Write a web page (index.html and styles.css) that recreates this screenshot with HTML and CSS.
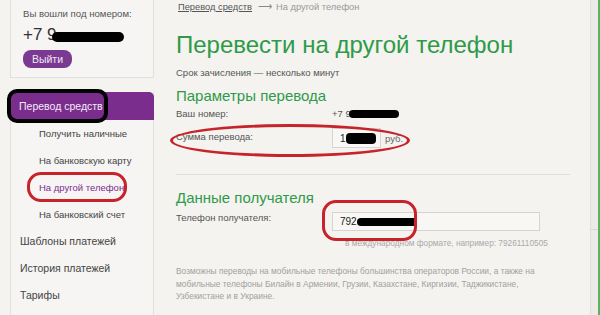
FILE: index.html
```html
<!DOCTYPE html>
<html lang="ru">
<head>
<meta charset="utf-8">
<link rel="stylesheet" href="styles.css">
</head>
<body>
<div class="page">
  <aside class="sidebar">
    <div class="login-box">
      <div class="login-label">Вы вошли под номером:</div>
      <div class="login-number">+7 9<span class="blob blob-login"></span></div>
      <button class="logout">Выйти</button>
    </div>
    <nav class="nav-box">
      <div class="nav-head">Перевод средств<span class="mark-black"></span></div>
      <ul class="subnav">
        <li>Получить наличные</li>
        <li>На банковскую карту</li>
        <li class="current">На другой телефон<span class="mark-red mark-nav"></span></li>
        <li>На банковский счет</li>
      </ul>
      <ul class="mainnav">
        <li>Шаблоны платежей</li>
        <li>История платежей</li>
        <li>Тарифы</li>
      </ul>
    </nav>
  </aside>
  <main class="content">
    <div class="crumbs"><a class="crumb-link">Перевод средств</a><span class="crumb-arrow">⟶</span><span class="crumb-cur">На другой телефон</span></div>
    <h1 class="title">Перевести на другой телефон</h1>
    <p class="sub">Срок зачисления — несколько минут</p>
    <h2 class="section">Параметры перевода</h2>
    <div class="row row-info">
      <div class="label">Ваш номер:</div>
      <div class="value">+7 9<span class="blob blob-num"></span></div>
    </div>
    <div class="row row-sum">
      <div class="label">Сумма перевода:</div>
      <div class="value"><span class="input input-sum">1<span class="blob blob-sum"></span></span><span class="unit">руб.</span></div>
      <span class="mark-red mark-sum"></span>
    </div>
    <hr class="sep">
    <h2 class="section section2">Данные получателя</h2>
    <div class="row row-phone">
      <div class="label">Телефон получателя:</div>
      <div class="value"><span class="input input-phone">792<span class="blob blob-phone"></span></span></div>
      <span class="mark-red mark-phone"></span>
    </div>
    <div class="hint">в международном формате, например: 79261110505</div>
    <p class="note">Возможны переводы на мобильные телефоны большинства операторов России, а также на мобильные телефоны Билайн в Армении, Грузии, Казахстане, Киргизии, Таджикистане, Узбекистане и в Украине.</p>
  </main>
  <div class="scroll"><div class="thumb"></div></div>
  <div class="edge"></div>
</div>
</body>
</html>
```
FILE: styles.css
```css
* { box-sizing: border-box; }
html, body { margin: 0; padding: 0; }
body {
  width: 600px; height: 315px; overflow: hidden;
  background: #f4f3f0;
  font-family: "Liberation Sans", Arial, sans-serif;
  color: #444;
}
.page { display: flex; height: 315px; }

.sidebar { width: 144px; margin-left: 10px; flex: none; display: flex; flex-direction: column; }
.login-box {
  height: 78px; border: 1px solid #e2e0dc; border-top: none;
  padding: 8px 0 0 12px; background: #f6f5f3;
}
.login-label { font-size: 9.6px; color: #555; line-height: 12px; }
.login-number { font-size: 17px; color: #333; margin-top: 6px; line-height: 18px; display: flex; align-items: center; }
.logout {
  margin-top: 6px; width: 49px; height: 18px; border: none; border-radius: 8px;
  background: #7a3a92; color: #f0e6f4; font: 10.5px "Liberation Sans", Arial, sans-serif;
  padding: 0; display: block;
}
.blob { display: inline-block; background: #000; border-radius: 6px; }
.blob-login { width: 72px; height: 10px; margin-left: -5px; margin-top: 3px; }
.nav-box {
  margin-top: 14px; flex: 1; border: 1px solid #e2e0dc; border-top: none; border-bottom: none;
  background: #f6f5f3;
}
.nav-head {
  position: relative; height: 28px; background: #7b2d8e; color: #f3eaf6;
  font-size: 10.5px; line-height: 28px; padding-left: 9px;
  border-top-right-radius: 5px; margin: 0 -1px 0 -1px;
}
.mark-black {
  position: absolute; left: -3px; top: -3px; width: 101px; height: 34px;
  border: 4px solid #000; border-radius: 10px;
}
.subnav, .mainnav { list-style: none; margin: 0; padding: 0; }
.subnav li {
  position: relative; font-size: 9.5px; color: #444; height: 27px; line-height: 27px; padding-left: 28px;
}
.subnav li.current { color: #7b2d8e; }
.mark-nav { left: 16px; top: -2px; width: 100px; height: 30px; }
.mainnav li { font-size: 10.5px; color: #444; height: 27px; line-height: 27px; padding-left: 9px; }

.content { flex: 1; margin-left: 22px; position: relative; }
.crumbs { font-size: 9.3px; margin-top: 1px; line-height: 12px; display: flex; align-items: center; padding-left: 2px; }
.crumb-link { color: #555; text-decoration: underline; }
.crumb-arrow { color: #888; margin: 0 4px 0 6px; font-size: 10px; }
.crumb-cur { color: #999; }
.title {
  font-weight: normal; font-size: 24px; color: #2f9a48; margin: 17px 0 0 0; line-height: 30px;
}
.sub { font-size: 9.5px; color: #555; margin: 7px 0 0 0; line-height: 12px; }
.section { font-weight: normal; font-size: 15px; color: #2f9a48; margin: 8px 0 0 0; line-height: 18px; }
.row { display: flex; position: relative; font-size: 9.5px; color: #555; }
.label { width: 156px; flex: none; line-height: 12px; }
.value { display: flex; align-items: center; }
.row-info { margin-top: 3px; line-height: 12px; }
.blob-num { width: 50px; height: 8px; margin-left: -2px; }
.row-sum { margin-top: 8px; }
.row-sum .label { padding-top: 3px; }
.input {
  display: flex; align-items: center; height: 20px; border: 1px solid #d6d4d0; background: #f8f7f5;
  padding-left: 7px; font-size: 10px; color: #222;
}
.input-sum { width: 49px; }
.blob-sum { width: 30px; height: 11px; border-radius: 4px; }
.unit { margin-left: 4px; color: #666; }
.mark-red { position: absolute; border: 3px solid #c6242a; border-radius: 14px; }
.mark-sum { left: -6px; top: -4px; width: 240px; height: 33px; border-radius: 50% / 50%; }
.sep { border: none; border-top: 1px solid #e1dfdb; margin: 26px 14px 0 0; }
.section2 { margin-top: 14px; }
.row-phone { margin-top: 5px; }
.row-phone .label { padding-top: 0; }
.input-phone { width: 208px; height: 19px; }
.blob-phone { width: 60px; height: 8px; }
.mark-phone { left: 146px; top: -12px; width: 95px; height: 41px; }
.hint { font-size: 8.3px; color: #aaa; margin: 7px 0 0 169px; line-height: 10px; }
.note { font-size: 8.4px; color: #a3a19d; margin: 17px 0 0 0; width: 372px; line-height: 12.5px; }

.scroll { width: 8px; flex: none; margin-left: 6px; background: #ecebe8; border-left: 1px solid #e0dfdb; }
.thumb { height: 230px; border-bottom: 1px solid #dad8d4; }
.edge { width: 2px; flex: none; background: #5ab35e; }
```
